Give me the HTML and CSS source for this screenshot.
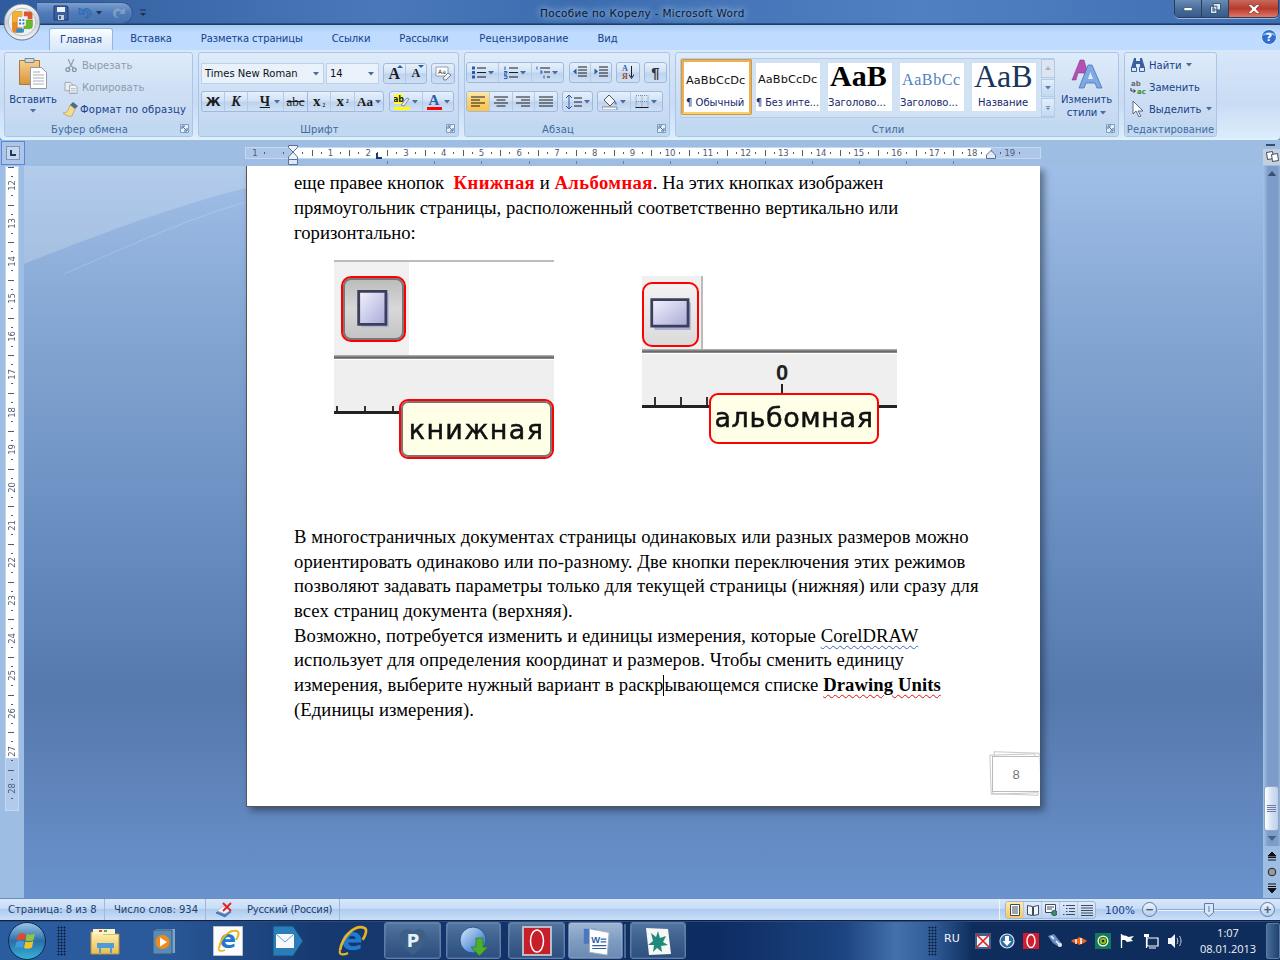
FILE: index.html
```html
<!DOCTYPE html>
<html lang="ru">
<head>
<meta charset="utf-8">
<title>Пособие по Корелу - Microsoft Word</title>
<link rel="stylesheet" href="styles.css">
</head>
<body>
<svg class="defs" aria-hidden="true">
  <defs>
    <linearGradient id="gClip" x1="0" y1="0" x2="0" y2="1"><stop offset="0" stop-color="#f6d08c"/><stop offset="1" stop-color="#d9943c"/></linearGradient>
    <linearGradient id="gOrb" x1="0" y1="0" x2="0" y2="1"><stop offset="0" stop-color="#9fc6e8"/><stop offset=".5" stop-color="#2a6ea8"/><stop offset="1" stop-color="#35b5d8"/></linearGradient>
    <linearGradient id="gSilver" x1="0" y1="0" x2="0" y2="1"><stop offset="0" stop-color="#fafbfc"/><stop offset=".5" stop-color="#c8d0d8"/><stop offset="1" stop-color="#f2f5f7"/></linearGradient>
    <linearGradient id="gFolder" x1="0" y1="0" x2="0" y2="1"><stop offset="0" stop-color="#fff2b0"/><stop offset="1" stop-color="#e6bc58"/></linearGradient>
    <linearGradient id="gGlobe" x1="0" y1="0" x2="1" y2="1"><stop offset="0" stop-color="#d8ecfb"/><stop offset="1" stop-color="#1b62c4"/></linearGradient>
    <linearGradient id="gPaper" x1="0" y1="0" x2="1" y2="1"><stop offset="0" stop-color="#f4f4fc"/><stop offset="1" stop-color="#a7a9d8"/></linearGradient>
    <symbol id="arr" viewBox="0 0 6 4"><path d="M0 0h6L3 3.500z"/></symbol>
    <symbol id="launch" viewBox="0 0 9 9"><path d="M.5.5h8v8h-8z" fill="#e6eff9" stroke="#7e9cc4"/><path d="M2 2h3M2 2v3M3 3l3.500 3.500M7 4v3H4" stroke="#4b6d9c" fill="none"/></symbol>
    <symbol id="bars" viewBox="0 0 14 12"><path d="M0 1.500h14M0 4.500h9M0 7.500h14M0 10.500h9" stroke="#1c1c1c" fill="none"/></symbol>
    <symbol id="barsC" viewBox="0 0 14 12"><path d="M0 1.500h14M2.500 4.500h9M0 7.500h14M2.500 10.500h9" stroke="#1c1c1c" fill="none"/></symbol>
    <symbol id="barsR" viewBox="0 0 14 12"><path d="M0 1.500h14M5 4.500h9M0 7.500h14M5 10.500h9" stroke="#1c1c1c" fill="none"/></symbol>
    <symbol id="barsJ" viewBox="0 0 14 12"><path d="M0 1.500h14M0 4.500h14M0 7.500h14M0 10.500h14" stroke="#1c1c1c" fill="none"/></symbol>
    <symbol id="eIcon" viewBox="0 0 24 24"><text x="12" y="19" text-anchor="middle" class="ie-e">e</text><path d="M3 19C5 8 14 0 21 2c3 1 1 6-1 9" fill="none" stroke="#e8b622" stroke-width="2"/><path d="M3 19c-1 3 2 4 6 2" fill="none" stroke="#e8b622" stroke-width="1.600"/></symbol>
  </defs>
</svg>

<div class="win">
  <header class="titlebar">
    <div class="qat">
      <svg class="ic16" viewBox="0 0 16 16"><path d="M1 1h13l1 1v13H1z" fill="#3a5f9e" stroke="#24396b"/><path d="M4 2h8v5H4z" fill="#eef2f8"/><path d="M5 10h6v5H5z" fill="#c6ccd8"/><path d="M6 11h2v3H6z" fill="#3a5f9e"/></svg>
      <svg class="ic16" viewBox="0 0 16 16"><path d="M3 3v6h6L7 7c2-2 5-1 5 2 0 2-1 3-3 4 4 0 6-2 6-5 0-4-5-6-8-3z" fill="#3f78c8" stroke="#27508c" stroke-width=".5"/></svg>
      <svg class="arr6 arr-dark" viewBox="0 0 6 4"><use href="#arr"/></svg>
      <svg class="ic16 dim" viewBox="0 0 16 16"><path d="M13 3v6H7l2-2C7 5 4 6 4 9c0 2 1 3 3 4-4 0-6-2-6-5 0-4 5-6 8-3z" fill="#8da6c6"/></svg>
    </div>
    <svg class="qat-more" viewBox="0 0 8 8"><path d="M1 1h6" stroke="#20304e"/><path d="M1 4h6L4 7z" fill="#20304e"/></svg>
    <div class="title-text">Пособие по Корелу - Microsoft Word</div>
    <div class="winbtns">
      <span class="wb wb-min"><svg viewBox="0 0 12 6" class="wbi"><path d="M.5.5h10v4H.5z" fill="#fff" stroke="#33506f"/></svg></span>
      <span class="wb wb-res"><svg viewBox="0 0 12 12" class="wbi"><path d="M3.500.5h8v7h-8zM.5 3.500h7v8h-7z" fill="#dfe8f2" stroke="#33506f"/><path d="M2.500 5.500h3v4h-3z" fill="#5d84b4"/></svg></span>
      <span class="wb wb-close"><svg viewBox="0 0 14 10" class="wbx"><path d="M1 .5h3L7 3l3-2.500h3L9 5l4 4.500h-3L7 7 4 9.500H1L5 5z" fill="#fff" stroke="#7a2a22" stroke-width=".6"/></svg></span>
    </div>
  </header>

  <svg class="officebtn" viewBox="0 0 40 40">
    <circle cx="20" cy="20" r="19" fill="url(#gSilver)" stroke="#5f7188"/>
    <circle cx="20" cy="20" r="14.500" fill="#eef1f4" stroke="#b4bcc6"/>
    <path d="M20 9h-7a3 3 0 0 0-3 3v16a3 3 0 0 0 3 3h7v-5h-5V14h5z" fill="#ea8a1c" stroke="#c0601c" stroke-width=".5"/>
    <path d="M10 20V12a3 3 0 0 1 3-3h7v5h-5v6z" fill="#f4b22c"/>
    <path d="M22 9h6a3 3 0 0 1 3 3v5h-5v-3h-4z" fill="#d65a2c"/>
    <path d="M22 18h9v6a3 3 0 0 1-3 3h-6z" fill="#6cb82c" stroke="#4c8c1c" stroke-width=".5"/>
    <path d="M16 16h8v8h-8z" fill="#f6f8fa"/>
    <path d="M17 17h2v2h-2zM20.500 17h2v2h-2zM17 20.500h2v2h-2zM20.500 20.500h2v2h-2z" fill="#2f72c8"/>
    <path d="M14 27h8v4h-8z" fill="#2f8ad0"/>
  </svg>

  <nav class="tabs">
    <span class="tab active">Главная</span>
    <span class="tab">Вставка</span>
    <span class="tab">Разметка страницы</span>
    <span class="tab">Ссылки</span>
    <span class="tab">Рассылки</span>
    <span class="tab tab-review">Рецензирование</span>
    <span class="tab">Вид</span>
    <svg class="help" viewBox="0 0 16 16"><circle cx="8" cy="8" r="7.500" fill="#2f6fd0" stroke="#dfeaf8"/><path d="M1 7c3-5 11-5 14 0-4-2-10-2-14 0z" fill="#8cb8ee"/><text x="8" y="12" text-anchor="middle" class="help-q">?</text></svg>
  </nav>

  <section class="ribbon">
    <div class="group g-clip">
      <div class="gbody row-body">
        <div class="paste">
          <svg class="paste-ic" viewBox="0 0 28 32">
            <path d="M.5 3.500h20v24H.5z" fill="url(#gClip)" stroke="#a8793a"/>
            <path d="M6 1.500h9v4H6z" fill="#cfd6de" stroke="#7f8790"/>
            <path d="M11.500 10.500h11l5 5v16h-16z" fill="#fff" stroke="#8f9aa8"/>
            <path d="M14 15h7M14 18h11M14 21h11M14 24h11M14 27h11" stroke="#a4adb8"/>
          </svg>
          <span class="paste-t">Вставить</span>
          <svg class="arr6 arr-blue" viewBox="0 0 6 4"><use href="#arr"/></svg>
        </div>
        <div class="smallcol">
          <div class="sbtn dis"><svg class="ic14" viewBox="0 0 14 14"><path d="M4 0l3 7 3-7M7 7L4 10M7 7l3 3" stroke="#9aa4b0" fill="none" stroke-width="1.400"/><circle cx="3.500" cy="11.500" r="2" fill="none" stroke="#8693a4" stroke-width="1.400"/><circle cx="10.500" cy="11.500" r="2" fill="none" stroke="#8693a4" stroke-width="1.400"/></svg>Вырезать</div>
          <div class="sbtn dis"><svg class="ic14" viewBox="0 0 14 14"><path d="M.5 1.500h6l2 2v7h-8z" fill="#e8edf3" stroke="#9aa4b0"/><path d="M5.500 4.500h6l2 2v7h-8z" fill="#f3f5f8" stroke="#9aa4b0"/><path d="M7 8h5M7 10h5M7 12h5" stroke="#b4bcc8"/></svg>Копировать</div>
          <div class="sbtn fmt"><svg class="ic16" viewBox="0 0 16 16"><path d="M10 1l5 4-3 3-5-4z" fill="#50688e"/><path d="M7 4l5 4-3 7c-3 1-7-1-9-3 3 0 5-1 7-8z" fill="#f2dc90" stroke="#ae8c3c" stroke-width=".6"/></svg>Формат по образцу</div>
        </div>
      </div>
      <div class="glabel">Буфер обмена<svg class="launch"><use href="#launch"/></svg></div>
    </div>

    <div class="group g-font">
      <div class="gbody col-body">
        <div class="trow">
          <div class="combo c-font">Times New Roman<svg class="arr6 arr-blue" viewBox="0 0 6 4"><use href="#arr"/></svg></div>
          <div class="combo c-size">14<svg class="arr6 arr-blue" viewBox="0 0 6 4"><use href="#arr"/></svg></div>
          <div class="seg w44">
            <span class="cell f1 glyph g-a1">A<i class="up"></i></span>
            <span class="cell f1 glyph g-a2">A<i class="dn"></i></span>
          </div>
          <div class="seg w24"><span class="cell f1"><svg class="ic16" viewBox="0 0 16 16"><path d="M1 1h12v9H1z" fill="#fff" stroke="#8ca0bc"/><text x="7" y="7.500" text-anchor="middle" class="tiny-a">Aa</text><path d="M8 12l5-5 3 2-5 5H9z" fill="#eef0f6" stroke="#6f7f98"/></svg></span></div>
        </div>
        <div class="trow">
          <div class="seg w183">
            <span class="cell w23 glyph serif b">Ж</span>
            <span class="cell w23 glyph serif bi">К</span>
            <span class="cell w36 glyph serif bu"><u>Ч</u><svg class="arr6 arr-blue" viewBox="0 0 6 4"><use href="#arr"/></svg></span>
            <span class="cell w24 glyph serif st">abc</span>
            <span class="cell w23 glyph serif bs">x<sub>₂</sub></span>
            <span class="cell w24 glyph serif bs">x<sup>²</sup></span>
            <span class="cell f1 glyph serif aa">Aa<svg class="arr6 arr-blue" viewBox="0 0 6 4"><use href="#arr"/></svg></span>
          </div>
          <div class="seg w65">
            <span class="cell w33"><svg class="ic16" viewBox="0 0 16 16"><path d="M0 0h9v10H0z" fill="#ffff30"/><text x="4.500" y="8" text-anchor="middle" class="tiny-ab">ab</text><path d="M7 11l6-7 2 1-5 7z" fill="#e8eef6" stroke="#7d8ca8"/><path d="M0 13h16v3H0z" fill="#ffff00"/></svg><svg class="arr6 arr-blue" viewBox="0 0 6 4"><use href="#arr"/></svg></span>
            <span class="cell f1"><span class="color-a">A</span><svg class="arr6 arr-blue" viewBox="0 0 6 4"><use href="#arr"/></svg></span>
          </div>
        </div>
      </div>
      <div class="glabel">Шрифт<svg class="launch"><use href="#launch"/></svg></div>
    </div>

    <div class="group g-para">
      <div class="gbody col-body">
        <div class="trow">
          <div class="seg w98">
            <span class="cell f1"><svg class="ic14" viewBox="0 0 14 12"><path d="M0 0h3v3H0zM0 4.500h3v3H0zM0 9h3v3H0z" fill="#2c5aa8"/><path d="M5 1.500h9M5 6h9M5 10.500h9" stroke="#1c1c1c"/></svg><svg class="arr6 arr-blue" viewBox="0 0 6 4"><use href="#arr"/></svg></span>
            <span class="cell f1"><svg class="ic14" viewBox="0 0 14 12"><path d="M1 0v3.500M0 5h3v1.500H0v2h3M0 9.500h3v2.500H0" stroke="#2c5aa8" fill="none"/><path d="M5 1.500h9M5 6h9M5 10.500h9" stroke="#1c1c1c"/></svg><svg class="arr6 arr-blue" viewBox="0 0 6 4"><use href="#arr"/></svg></span>
            <span class="cell f1"><svg class="ic14" viewBox="0 0 14 12"><path d="M1 0v3M4 4.500h2v2H4M8 9v3" stroke="#2c5aa8" fill="none"/><path d="M4 1.500h10M8 5.500h6M11 10.500h3" stroke="#1c1c1c"/></svg><svg class="arr6 arr-blue" viewBox="0 0 6 4"><use href="#arr"/></svg></span>
          </div>
          <div class="seg w43">
            <span class="cell f1"><svg class="ic14" viewBox="0 0 14 12"><path d="M5 .5h9M5 3.500h9M5 6.500h9M5 9.500h9" stroke="#1c1c1c"/><path d="M0 5l3.500-3v6z" fill="#2c5aa8"/></svg></span>
            <span class="cell f1"><svg class="ic14" viewBox="0 0 14 12"><path d="M5 .5h9M5 3.500h9M5 6.500h9M5 9.500h9" stroke="#1c1c1c"/><path d="M4 5L.5 2v6z" fill="#2c5aa8"/></svg></span>
          </div>
          <div class="seg w24"><span class="cell f1 sortcell"><span class="sort-t"><b class="s-a">A</b><b class="s-r">Я</b></span><svg class="ic-arrow" viewBox="0 0 5 13"><path d="M2.500 0v11M0 8.500l2.500 4 2.500-4" stroke="#1c1c1c" fill="none"/></svg></span></div>
          <div class="seg w23"><span class="cell f1 pilcrow">¶</span></div>
        </div>
        <div class="trow">
          <div class="seg w92">
            <span class="cell f1 on"><svg class="ic14"><use href="#bars"/></svg></span>
            <span class="cell f1"><svg class="ic14"><use href="#barsC"/></svg></span>
            <span class="cell f1"><svg class="ic14"><use href="#barsR"/></svg></span>
            <span class="cell f1"><svg class="ic14"><use href="#barsJ"/></svg></span>
          </div>
          <div class="seg w31"><span class="cell f1"><svg class="ic16" viewBox="0 0 16 14"><path d="M3 0v14M0 3l3-3 3 3M0 11l3 3 3-3" stroke="#2c5aa8" fill="none"/><path d="M8 3h8M8 7h8M8 11h8" stroke="#1c1c1c"/></svg><svg class="arr6 arr-blue" viewBox="0 0 6 4"><use href="#arr"/></svg></span></div>
          <div class="seg w66">
            <span class="cell f1"><svg class="ic16" viewBox="0 0 16 16"><path d="M7 1l6 6-5 5-6-6z" fill="#f4f6fa" stroke="#505868"/><path d="M13 7c2 2 2 3 1 4-1-1-2-2-1-4z" fill="#4f7fc0"/><path d="M0 13h15v3H0z" fill="#fff" stroke="#7f8896"/></svg><svg class="arr6 arr-blue" viewBox="0 0 6 4"><use href="#arr"/></svg></span>
            <span class="cell f1"><svg class="ic14" viewBox="0 0 13 13"><path d="M.5.500h12v12H.5zM6.500.500v12M.5 6.500h12" stroke="#7a8aa2" stroke-dasharray="1 1" fill="none"/><path d="M0 12.500h13" stroke="#1c1c1c"/></svg><svg class="arr6 arr-blue" viewBox="0 0 6 4"><use href="#arr"/></svg></span>
          </div>
        </div>
      </div>
      <div class="glabel">Абзац<svg class="launch"><use href="#launch"/></svg></div>
    </div>

    <div class="group g-styles">
      <div class="gbody row-body styles-body">
        <div class="gallery">
          <div class="tile current"><span class="tt t-norm">AaBbCcDc</span><span class="tl">¶ Обычный</span></div>
          <div class="tile"><span class="tt t-norm">AaBbCcDc</span><span class="tl">¶ Без инте...</span></div>
          <div class="tile"><span class="tt t-h1">AaB</span><span class="tl">Заголово...</span></div>
          <div class="tile"><span class="tt t-h2">AaBbCc</span><span class="tl">Заголово...</span></div>
          <div class="tile"><span class="tt t-title">AaB</span><span class="tl">Название</span></div>
          <div class="gscroll">
            <span class="gs gs-dis"><svg class="arr6" viewBox="0 0 6 4"><path d="M0 4h6L3 0z"/></svg></span>
            <span class="gs"><svg class="arr6" viewBox="0 0 6 4"><use href="#arr"/></svg></span>
            <span class="gs gs-more"><svg class="arr6" viewBox="0 0 6 6"><path d="M0 .5h6v1H0zM0 2.500h6L3 6z"/></svg></span>
          </div>
        </div>
        <div class="change">
          <svg class="change-ic" viewBox="0 0 32 30">
            <path d="M1 21L9 1h4l4 14-2 3-2-4H7l-2 7z" fill="#b44fb4" stroke="#7c2f80" stroke-width=".5"/>
            <path d="M8 29L17 6h4l10 23h-5l-2-5h-9l-2 5z" fill="#7fa9e2" stroke="#3c6cb0" stroke-width=".7"/>
            <path d="M17 20h5l-2.500-7z" fill="#dfeaf8"/>
          </svg>
          <span>Изменить</span>
          <span>стили<svg class="arr6 arr-blue" viewBox="0 0 6 4"><use href="#arr"/></svg></span>
        </div>
      </div>
      <div class="glabel">Стили<svg class="launch"><use href="#launch"/></svg></div>
    </div>

    <div class="group g-edit">
      <div class="gbody smallcol edit-col">
        <div class="sbtn"><svg class="ic16" viewBox="0 0 16 14"><path d="M4 0h2v3h4V0h2l3 10H10V6H6v4H1z" fill="#3a5f9e"/><path d="M1.500 9.500h5v4h-5zM9.500 9.500h5v4h-5z" fill="#dde6f4" stroke="#3a5f9e"/></svg>Найти<svg class="arr6 arr-blue" viewBox="0 0 6 4"><use href="#arr"/></svg></div>
        <div class="sbtn"><svg class="ic16 icbox" viewBox="0 0 16 16"><text x="1" y="7" class="ab-g">ab</text><text x="7" y="15" class="ac-g">ac</text><path d="M1 9v3h4M3.500 10.500L5.500 12 3.500 13.500" stroke="#334" fill="none"/></svg>Заменить</div>
        <div class="sbtn"><svg class="ic16" viewBox="0 0 12 16"><path d="M1 0v13l3-3 3 6 2-1-3-5h5z" fill="#fff" stroke="#57678a"/></svg>Выделить<svg class="arr6 arr-blue" viewBox="0 0 6 4"><use href="#arr"/></svg></div>
      </div>
      <div class="glabel edit-label">Редактирование</div>
    </div>
  </section>

  <div class="rulerrow">
    <div class="tabsel"><span class="tabsel-in"><i class="ell"></i></span></div>
    <div class="hruler">
      <span class="rc first">1</span><span class="rc rc-blank"></span><span class="rc">1</span><span class="rc">2</span><span class="rc">3</span><span class="rc">4</span><span class="rc">5</span><span class="rc">6</span><span class="rc">7</span><span class="rc">8</span><span class="rc">9</span><span class="rc">10</span><span class="rc">11</span><span class="rc">12</span><span class="rc">13</span><span class="rc">14</span><span class="rc">15</span><span class="rc">16</span><span class="rc">17</span><span class="rc">18</span><span class="rc">19</span>
    </div>
    <svg class="hg" viewBox="0 0 10 20"><path d="M.5.500h9v2L5 7 9.500 12v2.500h-9V12L5 7 .5 2.500z" fill="#eef3fa" stroke="#5a7094"/><path d="M.5 14.500h9v5h-9z" fill="#dfe8f4" stroke="#5a7094"/></svg>
    <svg class="hg-right" viewBox="0 0 10 9"><path d="M.5 8.500V5L5 .5 9.500 5v3.500z" fill="#e4ecf6" stroke="#5a7094"/></svg>
    <i class="tabstop"></i>
    <i class="rticks"></i>
    <i class="rsplit"></i>
    <svg class="viewruler" viewBox="0 0 17 16"><path d="M0 0h17v16H0z" fill="#c6d0dc"/><path d="M3.500 3.500l6-1 1 7-6 1z" fill="#fff" stroke="#3e4e66"/><path d="M8.500 5.500l6-1 1 7-6 1z" fill="#fff" stroke="#3e4e66"/></svg>
  </div>

  <main class="work">
    <svg class="swoosh" viewBox="0 0 222 110" aria-hidden="true"><path d="M0 0h222v22C150 40 70 70 0 98z" fill="#fff" fill-opacity=".2"/><path d="M40 108C100 82 165 52 222 36" fill="none" stroke="#fff" stroke-opacity=".18"/></svg>
    <aside class="vbar">
      <div class="vruler">
        <span class="vc"><b>12</b></span><span class="vc"><b>13</b></span><span class="vc"><b>14</b></span><span class="vc"><b>15</b></span><span class="vc"><b>16</b></span><span class="vc"><b>17</b></span><span class="vc"><b>18</b></span><span class="vc"><b>19</b></span><span class="vc"><b>20</b></span><span class="vc"><b>21</b></span><span class="vc"><b>22</b></span><span class="vc"><b>23</b></span><span class="vc"><b>24</b></span><span class="vc"><b>25</b></span><span class="vc"><b>26</b></span><span class="vc"><b>27</b></span><span class="vc"><b>28</b></span>
      </div>
    </aside>
    <div class="docarea">
      <article class="page">
        <p class="para para-first">еще правее кнопок&nbsp; <b class="red">Книжная</b> и <b class="red">Альбомная</b>. На этих кнопках изображен<br>прямоугольник страницы, расположенный соответственно вертикально или<br>горизонтально:</p>
        <div class="figs">
          <figure class="fig fig-l">
            <i class="l-top"></i>
            <i class="l-panel"></i>
            <i class="l-line"></i>
            <i class="l-strip"></i>
            <i class="l-axis"></i>
            <i class="l-dots"></i>
            <span class="l-btn"><svg class="pg pg-p" viewBox="0 0 30 34"><path d="M4 3h24v30H4z" fill="#aeb0da"/><path d="M1.500 1.500h24v29h-24z" fill="url(#gPaper)" stroke="#3b3f5c" stroke-width="2.500"/></svg></span>
            <span class="tip tip-l">книжная</span>
          </figure>
          <figure class="fig fig-r">
            <i class="r-panel"></i>
            <i class="r-line"></i>
            <i class="r-strip"></i>
            <i class="r-axis"></i>
            <i class="r-dots"></i>
            <b class="r-zero">0</b>
            <i class="r-tick"></i>
            <span class="r-btn"><svg class="pg pg-l" viewBox="0 0 38 30"><path d="M4 4h33v25H4z" fill="#aeb0da"/><path d="M1.500 1.500h33v24h-33z" fill="url(#gPaper)" stroke="#3b3f5c" stroke-width="2.500"/></svg></span>
            <span class="tip tip-r">альбомная</span>
          </figure>
        </div>
        <p class="para">В многостраничных документах страницы одинаковых или разных размеров можно<br>ориентировать одинаково или по-разному. Две кнопки переключения этих режимов<br>позволяют задавать параметры только для текущей страницы (нижняя) или сразу для<br>всех страниц документа (верхняя).<br>Возможно, потребуется изменить и единицы измерения, которые <span class="sq-blue">CorelDRAW</span><br>использует для определения координат и размеров. Чтобы сменить единицу<br>измерения, выберите нужный вариант в раскр<span class="caret"></span>ывающемся списке <b class="sq-red">Drawing Units</b><br>(Единицы измерения).</p>
        <div class="pagenum"><i class="pn-back1"></i><i class="pn-back2"></i><span class="pn-front">8</span></div>
      </article>
    </div>
    <aside class="vscroll">
      <svg class="sb-arr sb-up" viewBox="0 0 12 7"><path d="M0 7h12L6 0z"/></svg>
      <span class="sb-track"><span class="sb-thumb"><i class="grip"></i></span></span>
      <svg class="sb-arr sb-down" viewBox="0 0 12 7"><path d="M0 0h12L6 7z"/></svg>
      <span class="sb-browse">
        <svg class="br" viewBox="0 0 10 10"><path d="M5 0l4 4H1zM1 5.500h8M1 8h8" stroke="#111" fill="#111"/></svg>
        <svg class="br" viewBox="0 0 10 10"><circle cx="5" cy="5" r="3.800" fill="#9a9a9a" stroke="#222"/></svg>
        <svg class="br" viewBox="0 0 10 10"><path d="M1 1h8M1 3.500h8M5 10L1 5.500h8z" stroke="#111" fill="#111"/></svg>
      </span>
    </aside>
  </main>

  <footer class="status">
    <span class="st st1">Страница: 8 из 8</span>
    <span class="st st2">Число слов: 934</span>
    <span class="st st3"><svg class="ic18" viewBox="0 0 18 16"><path d="M1 11l6-5 9 4-6 5z" fill="#4b7ec4" stroke="#24467c" stroke-width=".5"/><path d="M2 9l6-5 8 4-6 4z" fill="#eef2f8" stroke="#8a98ae" stroke-width=".5"/><path d="M8 1l8 8M16 1l-8 8" stroke="#e02020" stroke-width="1.800"/></svg><span class="st-lang">Русский (Россия)</span></span>
    <span class="st-fill"></span>
    <div class="viewctl">
      <span class="vb on"><svg class="ic12" viewBox="0 0 12 12"><path d="M1.500.500h9v11h-9z" fill="#fff" stroke="#3e4a5e"/><path d="M3 3h6M3 5h6M3 7h6M3 9h6" stroke="#3e4a5e"/></svg></span>
      <span class="vb"><svg class="ic12" viewBox="0 0 12 12"><path d="M.5 1.500l5 1v9l-5-1zM11.500 1.500l-5 1v9l5-1z" fill="#f4f6fa" stroke="#3e4a5e"/></svg></span>
      <span class="vb"><svg class="ic12" viewBox="0 0 12 12"><path d="M.5.500h10v8H.5z" fill="#fff" stroke="#3e4a5e"/><path d="M2 3h7M2 5h5" stroke="#3e4a5e"/><circle cx="9.300" cy="9" r="2.700" fill="#3f8c5c" stroke="#2a5c8c"/></svg></span>
      <span class="vb"><svg class="ic12" viewBox="0 0 12 12"><path d="M0 1.500h1.500M3 1.500h9M3 4.500h1.500M6 4.500h6M3 7.500h1.500M6 7.500h6M0 10.500h1.500M3 10.500h9" stroke="#3e4a5e"/></svg></span>
      <span class="vb"><svg class="ic12" viewBox="0 0 12 12"><path d="M0 1.500h12M0 4h12M0 6.500h12M0 9h12M0 11.500h12" stroke="#3e4a5e"/></svg></span>
    </div>
    <span class="zoomval">100%</span>
    <span class="zbtn">−</span>
    <span class="zslider"><svg class="zthumb" viewBox="0 0 10 14"><path d="M.5.500h9v9L5 13.500.5 9.500z" fill="#dbe7f6" stroke="#5b7ca8"/><path d="M5 3v6" stroke="#5b7ca8"/></svg></span>
    <span class="zbtn">+</span>
  </footer>
</div>

<div class="taskbar">
  <svg class="orb" viewBox="0 0 38 38">
    <circle cx="19" cy="19" r="18.500" fill="url(#gOrb)" stroke="#0c2d52"/>
    <path d="M10 13c3-2 5-2 8-1l-1.500 6.500c-3-1-5-1-8 .5z" fill="#e0492c"/>
    <path d="M19 12c3 1 5 1 8-.5L25.500 18c-3 1.500-5 1.500-8 .5z" fill="#8cc63e"/>
    <path d="M8.300 20c3-1.500 5-1.500 8-.5L15 26c-3-1-5-1-8 .5z" fill="#3e9cdc"/>
    <path d="M17.300 19.500c3 1 5 1 8-.5L24 25.500c-3 1.500-5 1.500-8 .5z" fill="#f5c22c"/>
  </svg>
  <i class="tgrip"></i>
  <span class="pin p-folder"><svg class="ti" viewBox="0 0 32 30"><path d="M2 6h10l2 2h16v20H2z" fill="url(#gFolder)" stroke="#b8913e"/><path d="M4 3h22v5H4z" fill="#fbf3cc"/><path d="M10 4h3v2h-3z" fill="#d94a3c"/><path d="M15 4h3v2h-3z" fill="#5aa85a"/><path d="M8 17h17v5H8z" fill="#4d9cd8"/><path d="M10 22h2v5h-2zM21 22h2v5h-2z" fill="#4d9cd8"/></svg></span>
  <span class="pin p-media"><svg class="ti" viewBox="0 0 24 28"><path d="M4 2h19v24H4z" fill="#7fa4c4"/><path d="M1 3h19v24H1z" fill="#5c8cb4" stroke="#34597e"/><circle cx="10.500" cy="15" r="7" fill="#f08a1c"/><path d="M8 10.500l7 4.500-7 4.500z" fill="#fff"/></svg></span>
  <span class="pin p-ie"><svg class="ti" viewBox="0 0 30 30"><path d="M.5.500h29v29H.5z" fill="#fcfcfc" stroke="#b6c2d0"/><use href="#eIcon" x="3" y="3" width="24" height="24"/></svg></span>
  <span class="pin p-mail"><svg class="ti" viewBox="0 0 32 32"><path d="M1 1h20l10 15-10 15H1z" fill="#2b7db8" stroke="#174d80"/><path d="M4 9h18v14H4z" fill="#f6f8fc"/><path d="M4 9l9 8 9-8" fill="none" stroke="#6a9cc8"/></svg></span>
  <span class="pin p-ie2"><svg class="ti" viewBox="0 0 24 24"><use href="#eIcon"/></svg></span>
  <span class="tbtn b-p"><svg class="ti" viewBox="0 0 30 30"><path d="M15 29C6 22 1 16 2 9c1-6 9-8 13-3 4-5 12-3 13 3 1 7-4 13-13 20z" fill="#3c6088"/><text x="15" y="21" text-anchor="middle" class="p-let">P</text></svg></span>
  <span class="tbtn b-globe"><svg class="ti" viewBox="0 0 30 30"><circle cx="14" cy="14" r="13" fill="url(#gGlobe)" stroke="#20589c"/><path d="M17 12h7v9h5l-8.500 9L12 21h5z" fill="#4db02c" stroke="#2a7016" stroke-width=".6"/></svg></span>
  <span class="tbtn b-opera"><svg class="ti" viewBox="0 0 30 30"><path d="M1 1h28v28H1z" fill="#c81e2c" stroke="#b8bcc4" stroke-width="2"/><ellipse cx="15" cy="15" rx="6.500" ry="11" fill="none" stroke="#fff" stroke-width="1.500"/></svg></span>
  <span class="tbtn b-word active"><svg class="ti" viewBox="0 0 32 32"><path d="M3 3h13v16H3z" fill="#4a78c0"/><path d="M9 3l21 4-2 24-19-3z" fill="#fff" stroke="#9eb0c8"/><path d="M21 14h6M21 17h6M12 21h15M12 24h15" stroke="#2e5ea8" stroke-width="1.300"/><text x="11" y="18" class="w-let">W</text></svg></span>
  <i class="tb-sep"></i>
  <span class="tbtn b-plant"><svg class="ti" viewBox="0 0 30 30"><path d="M3 2l22 1 3 25-22 1z" fill="#f6f8f6"/><path d="M8 7l5 4 2-6 2 7 6-2-3 6 5 3-7 1 1 6-5-4-4 4 1-7-6 0 5-4z" fill="#1e8a7c"/></svg></span>
  <span class="tfill"></span>
  <i class="tgrip"></i>
  <span class="lang">RU</span>
  <div class="tray">
    <svg class="ic16b" viewBox="0 0 16 16"><path d="M0 0h16v16H0z" fill="#3c6488"/><path d="M2 3h12v11H2z" fill="#eef2f6"/><path d="M1 1l14 14M15 1L1 15" stroke="#e01c1c" stroke-width="1.500"/></svg>
    <svg class="ic16b" viewBox="0 0 16 16"><circle cx="8" cy="8" r="7" fill="#2a6ea8" stroke="#dfe6ee" stroke-width="1.200"/><path d="M6 3h4v5h2.500L8 13 3.500 8H6z" fill="#fff"/></svg>
    <svg class="ic16b" viewBox="0 0 16 16"><path d="M0 0h16v16H0z" fill="#d01c2c"/><ellipse cx="8" cy="8" rx="4" ry="6.500" fill="none" stroke="#fff" stroke-width="1.400"/></svg>
    <svg class="ic16b" viewBox="0 0 16 16"><path d="M1 3l6-2 4 5 4 5-3 3-6-4z" fill="#6a8cc4"/><path d="M4 3l3 3M9 8l3 3" stroke="#f0f4fa" stroke-width="1.500"/><circle cx="13" cy="12" r="2" fill="#e4e8ee"/></svg>
    <svg class="ic16b" viewBox="0 0 16 16"><path d="M0 8l3-2 2 1 3-3 5 2 3 2-3 2-5 2-3-3-2 1z" fill="#f0641c"/><path d="M5 6v5M10 5v6" stroke="#fff" stroke-width="1.500"/></svg>
    <svg class="ic16b" viewBox="0 0 16 16"><path d="M0 0h16v16H0z" fill="#0f7a5c"/><circle cx="8" cy="8" r="5.500" fill="#fff"/><circle cx="8" cy="8" r="3.800" fill="#8cc21c" stroke="#2a5c1c"/><circle cx="8" cy="8" r="1.200" fill="#14301c"/></svg>
    <svg class="ic16b" viewBox="0 0 16 16"><path d="M2.500 1v14" stroke="#fff" stroke-width="1.300"/><path d="M3 2l5 1 1 1 6-1-3 3 2 2-6 1-2-2-3 0z" fill="#fff"/></svg>
    <svg class="ic16b" viewBox="0 0 16 16"><path d="M4 5h11v8H4zM6 15h7" fill="#12305c" stroke="#fff" stroke-width="1.200"/><path d="M1 1h5v3H1z" fill="#fff"/><path d="M3.500 4v11" stroke="#fff" stroke-width="1.200"/></svg>
    <svg class="ic16b" viewBox="0 0 16 16"><path d="M1 5h3l4-4v14l-4-4H1z" fill="#f2f4f8"/><path d="M10 5c1 2 1 4 0 6M12.500 3c2 3 2 7 0 10" fill="none" stroke="#c4cede"/></svg>
  </div>
  <div class="clock"><span>1:07</span><span>08.01.2013</span></div>
  <span class="showdesk"></span>
</div>
</body>
</html>
```

FILE: styles.css
```css
* { box-sizing: border-box; }
html, body { margin: 0; padding: 0; }
body {
  width: 1280px; height: 960px; overflow: hidden;
  display: flex; flex-direction: column;
  font-family: "DejaVu Sans", sans-serif; font-size: 10px;
  color: #15428b; background: #6a92cc;
}
i, b.r-zero { display: block; }
svg { display: block; flex: none; }
.defs { position: absolute; width: 0; height: 0; }
.win { flex: 1; display: flex; flex-direction: column; position: relative; min-height: 0; }

/* title bar */
.titlebar {
  height: 25px; flex: none; position: relative; display: flex; align-items: flex-start;
  padding-left: 37px;
  background: linear-gradient(90deg, #2f5c9e 0%, #4a78b8 30%, #3c6cb0 45%, #5180c2 72%, #3e6eb2 100%);
  border-bottom: 1px solid #1f3d66;
  box-shadow: inset 0 -1px 0 #2a4f82;
}
.officebtn { position: absolute; left: 3px; top: 3px; width: 38px; height: 38px; z-index: 3; }
.qat {
  margin-top: 2px; width: 96px; height: 22px; display: flex; align-items: center; gap: 7px;
  padding-left: 16px;
  border: 1px solid #3a5680; border-left: 0; border-radius: 0 12px 12px 0;
  background: linear-gradient(#7aa0d2, #4f7bb8 50%, #4472b0);
}
.qat-more { width: 8px; height: 8px; margin: 9px 0 0 6px; }
.ic16 { width: 16px; height: 16px; }
.ic14 { width: 14px; height: 13px; }
.ic12 { width: 12px; height: 12px; }
.ic18 { width: 18px; height: 16px; }
.dim { opacity: .75; margin-left: 3px; }
.arr6 { width: 6px; height: 4px; }
.arr-dark { fill: #1f3458; margin-left: -3px; }
.arr-blue { fill: #4a6c9c; }
.title-text {
  position: absolute; left: 540px; top: 7px; font-size: 10.5px; letter-spacing: .29px;
  color: #0e1a2c; white-space: nowrap;
  text-shadow: 0 0 6px #a8c8ee, 0 0 10px #a8c8ee;
}
.winbtns {
  margin-left: auto; margin-right: 1px; width: 105px; height: 18px; display: flex;
  border: 1px solid #2a3e58; border-top: 0; border-radius: 0 0 5px 5px; overflow: hidden;
  box-shadow: 0 1px 0 #9ab8dc;
}
.wb { display: flex; align-items: center; justify-content: center; border-right: 1px solid #2a3e58; }
.wb-min, .wb-res { width: 27px; background: linear-gradient(#6a8cb4, #4a6e9c 50%, #36598a); }
.wb-close { flex: 1; border-right: 0; background: linear-gradient(#c86a5c, #b83a2c 50%, #e07868); }
.wbi { width: 11px; height: 11px; }
.wb-min .wbi { height: 5px; margin-top: 2px; }
.wbx { width: 14px; height: 10px; }

/* tabs */
.tabs {
  height: 25px; flex: none; display: flex; align-items: flex-end; gap: 6px;
  padding-left: 49px; background: linear-gradient(#a8cbf2, #bfdbff 30%, #bfdbff);
  position: relative;
}
.tab { height: 22px; padding: 0 11.5px; line-height: 22px; color: #15428b; white-space: nowrap; letter-spacing: -.12px; }
.tab.active {
  color: #15428b; border: 1px solid #8fb5e2; border-bottom: 0; border-radius: 3px 3px 0 0;
  background: linear-gradient(#fff, #eaf3fd 40%, #d9e8f9); line-height: 21px; padding: 0 10px; letter-spacing: -.2px;
}
.tab-review { margin-left: 2px; letter-spacing: .15px; }
.help { width: 16px; height: 16px; position: absolute; right: 3px; top: 4px; }
.help-q { font: bold 11px "DejaVu Sans", sans-serif; fill: #fff; }

/* ribbon */
.ribbon {
  height: 90px; flex: none; display: flex; gap: 5px; padding: 2px 3px 3px 4px;
  background: linear-gradient(#d8e7f9, #c9dcf4 60%, #dcecfb);
  border-bottom: 2px solid #dff2fc;
  border-radius: 0 0 4px 4px;
}
.group {
  display: flex; flex-direction: column; position: relative; height: 85px;
  border: 1px solid #a9c6e8; border-radius: 3px; overflow: hidden;
  background: linear-gradient(#deebf9, #cfe0f5 45%, #c2d6f0);
}
.g-clip { width: 189px; }
.g-font { width: 261px; }
.g-para { width: 206px; }
.g-styles { width: 444px; }
.g-edit { width: 93px; }
.gbody { flex: 1; min-height: 0; }
.row-body { display: flex; }
.col-body { display: flex; flex-direction: column; gap: 7px; padding: 10px 0 0 2px; }
.g-para .col-body { padding: 9px 0 0 1px; gap: 8px; }
.glabel {
  height: 15px; flex: none; text-align: center; line-height: 17px; color: #44699e; letter-spacing: .1px;
  background: #c1d8f1; position: relative; white-space: nowrap; padding-right: 18px;
}
.edit-label { letter-spacing: 0; padding-right: 0; }
.launch { width: 9px; height: 9px; position: absolute; right: 3px; top: 3px; }

.paste { width: 50px; display: flex; flex-direction: column; align-items: center; padding-top: 4px; flex: none; margin-left: 3px; }
.paste-ic { width: 28px; height: 32px; }
.paste-t { margin-top: 4px; line-height: 14px; white-space: nowrap; letter-spacing: -.1px; }
.paste .arr6 { margin-top: 2px; }
.smallcol { display: flex; flex-direction: column; }
.sbtn { height: 22px; display: flex; align-items: center; gap: 4px; white-space: nowrap; }
.g-clip .smallcol { margin-left: 3px; padding-top: 1px; }
.g-clip .sbtn { padding-left: 1px; }
.g-clip .sbtn:nth-child(-n+2) { padding-left: 3px; gap: 4px; }
.g-clip .sbtn.fmt { gap: 1px; letter-spacing: .22px; padding-left: 2px; }
.dis { color: #8d9bad; }
.edit-col { padding: 1px 0 0 5px; }
.edit-col .sbtn { gap: 3px; }
.edit-col .sbtn .arr6 { margin-left: 2px; }

.trow { display: flex; height: 21px; gap: 4px; }
.combo {
  height: 21px; display: flex; align-items: center; justify-content: space-between; padding: 0 4px 0 3px;
  color: #111; background: #e9f1fb; border: 1px solid #bdd2ea; white-space: nowrap;
}
.c-font { width: 123px; margin-right: -2px; }
.c-size { width: 53px; }
.seg {
  height: 21px; display: flex; border: 1px solid #9fbadc; border-radius: 3px; overflow: hidden;
  background: linear-gradient(#e6f0fb, #d2e2f6 45%, #bed3ee 55%, #cfe0f5);
}
.w24 { width: 24px; } .w23 { width: 23px; } .w33 { width: 33px; flex: none; } .w36 { width: 36px; flex: none; }
.w44 { width: 44px; } .w43 { width: 43px; } .w65 { width: 65px; margin-left: 1px; } .w66 { width: 66px; }
.w92 { width: 92px; } .w98 { width: 98px; margin-right: 1px; } .w31 { width: 31px; } .w183 { width: 183px; }
.seg .cell.w23 { width: 23px; flex: none; } .seg .cell.w24 { width: 24px; flex: none; }
.cell {
  display: flex; align-items: center; justify-content: center; gap: 2px; min-width: 0;
  border-right: 1px solid #b4cbe6; color: #111; position: relative; white-space: nowrap;
}
.cell:last-child { border-right: 0; }
.f1 { flex: 1; }
.on { background: linear-gradient(#fde9a8, #fbd06c 50%, #fcc24c); }
.serif { font-family: "Liberation Serif", serif; }
.glyph { font-weight: bold; color: #1c1c1c; }
.b { font-family: "DejaVu Sans", sans-serif; font-size: 12px; }
.bi { font-style: italic; font-size: 14px; }
.bu { font-size: 14px; gap: 4px; justify-content: flex-end; padding-right: 3px; }
.serif.st { text-decoration: line-through; font-size: 13px; font-weight: normal; }
.bs { font-size: 15px; }
.bs sub, .bs sup { font-size: 9px; line-height: 0; }
.aa { font-size: 13px; }
.g-a1 { font-family: "Liberation Serif", serif; font-size: 16px; }
.g-a2 { font-family: "Liberation Serif", serif; font-size: 12px; }
.up, .dn { width: 0; height: 0; border: 3px solid transparent; position: absolute; right: 2px; top: 1px; }
.up { border-top: 0; border-bottom: 3px solid #2c5aa8; }
.dn { border-bottom: 0; border-top: 3px solid #2c5aa8; }
.tiny-a { font: 6px "DejaVu Sans", sans-serif; fill: #222; }
.tiny-ab { font: bold 8px "DejaVu Sans", sans-serif; fill: #222; }
.color-a { font: bold 15px/15px "Liberation Serif", serif; color: #2c5aa8; border-bottom: 3px solid #f00; width: 15px; text-align: center; height: 17px; }
.sortcell { gap: 1px; }
.sort-t { display: flex; flex-direction: column; font: bold 8px/8px "Liberation Serif", serif; }
.s-a { color: #2c5aa8; }
.s-r { color: #a84a2c; }
.ic-arrow { width: 5px; height: 13px; }
.pilcrow { font: bold 15px "Liberation Sans", sans-serif; color: #333; }

/* styles gallery */
.styles-body { padding: 5px 0 0 4px; }
.gallery {
  width: 375px; height: 60px; flex: none; display: flex; gap: 8px; align-items: flex-start; padding-left: 0;
  border: 1px solid #b2cbe8; border-radius: 2px; background: #d2e2f5; position: relative;
}
.tile {
  width: 64px; height: 48px; margin-top: 4px; flex: none; background: #fff; display: flex; flex-direction: column;
  align-items: flex-start; color: #15286b;
}
.tile.current {
  width: 71px; height: 56px; margin: 0 -4px 0 0; padding: 3px 2px;
  border: 3px solid #f0b050; border-radius: 2px;
  outline: 1px solid #c99a52; outline-offset: -1px;
  background: #fff;
  border-bottom-color: #fbd060;
}
.tt { height: 33px; flex: none; display: flex; align-items: center; white-space: nowrap; width: 100%; color: #111; padding-left: 2px; }
.current .tt { height: 31px; padding-left: 0; }
.t-norm { font-size: 11.3px; letter-spacing: .1px; overflow: hidden; }
.t-h1 { font: bold 30px/24px "Liberation Serif", serif; color: #000; padding-bottom: 8px; }
.t-h2 { font: 16px/20px "Liberation Serif", serif; color: #4f81bd; letter-spacing: .6px; }
.t-title { font: 32px/24px "Liberation Serif", serif; color: #17365d; padding-bottom: 8px; }
.tl { font-size: 10px; line-height: 14px; white-space: nowrap; }
.tile:nth-child(2) .tl { font-size: 9.600px; }
.tile:nth-child(5) .tl { padding-left: 6px; }
.gscroll { margin-left: -3px; width: 14px; flex: none; display: flex; flex-direction: column; align-self: stretch; gap: 1px; }
.gs {
  flex: 1; display: flex; align-items: center; justify-content: center; fill: #5a7aa8;
  background: linear-gradient(#e2eefb, #c4d8f1); border: 1px solid #b2cbe8;
}
.gs-dis { background: #dde5ee; fill: #a8b4c4; }
.change { flex: 1; display: flex; flex-direction: column; align-items: center; line-height: 13px; padding-top: 1px; }
.change span { display: flex; align-items: center; gap: 3px; white-space: nowrap; }
.change-ic { width: 32px; height: 30px; margin-bottom: 4px; }

/* rulers */
.rulerrow {
  height: 26px; flex: none; position: relative; display: flex;
  background: #9ebde3;
}
.tabsel {
  width: 24px; height: 24px; margin: 1px 0 0 1px; flex: none; border: 1px solid #5a86d8;
  background: #adc5e8; display: flex; align-items: center; justify-content: center;
}
.tabsel-in { width: 14px; height: 14px; background: #c8d6e8; border: 1px solid #7898c4; display: flex; align-items: center; justify-content: center; }
.ell { width: 6px; height: 6px; border-left: 2px solid #1f3a6a; border-bottom: 2px solid #1f3a6a; }
.hruler {
  width: 796px; height: 12px; margin: 7px 0 0 220px; display: flex; overflow: hidden; flex: none;
  background: linear-gradient(90deg, #adc6ea 48px, #fff 48px, #fff 746px, #adc6ea 746px);
  outline: 1px solid #c6d8f0; outline-offset: -1px;
}
.rc {
  flex: 0 0 37.75px; height: 12px; text-align: center; font-size: 8.5px; line-height: 12px; color: #4e5c74;
  background:
    linear-gradient(#4e5c74, #4e5c74) 9px 5px / 1px 2px no-repeat,
    linear-gradient(#4e5c74, #4e5c74) 28px 5px / 1px 2px no-repeat,
    linear-gradient(#4e5c74, #4e5c74) 0 3px / 1px 6px no-repeat;
}
.rc.first { margin-left: -9px; }
.rc-blank { background:
    linear-gradient(#4e5c74, #4e5c74) 9px 5px / 1px 2px no-repeat,
    linear-gradient(#4e5c74, #4e5c74) 28px 5px / 1px 2px no-repeat; }
.hg { position: absolute; left: 288px; top: 5px; width: 10px; height: 20px; }
.hg-right { position: absolute; left: 986px; top: 10px; width: 10px; height: 9px; }
.tabstop { position: absolute; left: 376px; top: 13px; width: 6px; height: 6px; border-left: 2px solid #1f3a6a; border-bottom: 2px solid #1f3a6a; }
.rticks {
  position: absolute; left: 387px; top: 21px; width: 568px; height: 3px;
  background: repeating-linear-gradient(90deg, #6a7f9e 0 1px, transparent 1px 47.2px);
}
.rsplit { position: absolute; left: 1266px; top: 4px; width: 9px; height: 2px; background: #3c4c6c; }
.viewruler { position: absolute; left: 1263px; top: 9px; width: 17px; height: 16px; }

.work {
  flex: 1; min-height: 0; display: flex; position: relative;
  background: linear-gradient(#a0bfe8 0, #84a6d2 22%, #6389bd 55%, #5579ac 72%, #6a92cc 100%);
  overflow: hidden;
}
.swoosh { position: absolute; left: 24px; top: 0; width: 222px; height: 110px; }
.vbar { width: 24px; flex: none; background: #9ebde3; position: relative; }
.vruler {
  width: 14px; margin: 0 0 0 5px; height: 645px; display: flex; flex-direction: column; padding-top: 1px;
  background: linear-gradient(#fff 592px, #b2cbec 592px);
  outline: 1px solid #c6d8f0; outline-offset: -1px; overflow: hidden;
}
.vc {
  flex: 0 0 37.7px; display: flex; align-items: center; justify-content: center;
  background:
    linear-gradient(#4e5c74, #4e5c74) 6px 9px / 2px 1px no-repeat,
    linear-gradient(#4e5c74, #4e5c74) 6px 28px / 2px 1px no-repeat,
    linear-gradient(#4e5c74, #4e5c74) 3px 0 / 6px 1px no-repeat;
}
.vc b { font-weight: normal; font-size: 8.5px; color: #4e5c74; writing-mode: vertical-rl; transform: rotate(180deg); line-height: 10px; }
.docarea { flex: 1; min-width: 0; padding-left: 222px; position: relative; }
.page {
  width: 794px; height: 641px; background: #fff; position: relative; padding: 4px 0 0 47px;
  border-left: 1px solid #555; border-bottom: 1px solid #555;
  box-shadow: 4px 4px 7px rgba(30, 40, 60, .55);
  font-family: "Liberation Serif", serif; font-size: 18.67px; line-height: 24.65px; color: #000;
}
.para { margin: 0; white-space: nowrap; letter-spacing: .08px; }
.para-first { letter-spacing: .02px; line-height: 25px; }
.red { color: #f00; letter-spacing: .4px; }
.caret { display: inline-block; width: 1px; height: 21px; background: #000; vertical-align: -5px; }
.sq-blue { text-decoration: underline wavy #3a66c8 1px; text-underline-offset: 3px; }
.sq-red { text-decoration: underline wavy #e01010 1px; text-underline-offset: 3px; }

.figs { display: flex; align-items: flex-start; margin: 15px 0 64px 40px; height: 201px; }
.fig { margin: 0; position: relative; flex: none; font-family: "DejaVu Sans", sans-serif; }
.fig i, .fig b, .fig span { position: absolute; }
.fig-l { width: 220px; height: 200px; }
.fig-r { width: 255px; height: 170px; margin: 16px 0 0 88px; }
.l-top { left: 0; top: 0; width: 220px; height: 2px; background: #bcbcbc; }
.l-panel { left: 0; top: 2px; width: 75px; height: 94px; background: #f0f0f0; }
.l-line { left: 0; top: 95px; width: 220px; height: 4px; background: linear-gradient(#bbb, #666 60%, #999); }
.l-strip { left: 0; top: 100px; width: 220px; height: 51px; background: #efefef; }
.l-axis { left: 0; top: 151px; width: 70px; height: 3px; background: #222; }
.l-dots { left: 2px; top: 146px; width: 60px; height: 5px; background: repeating-linear-gradient(90deg, #333 0 2px, transparent 2px 28px); }
.l-btn {
  left: 7px; top: 16px; width: 65px; height: 66px; display: flex; align-items: center; justify-content: center;
  border: 2px solid #f00; border-radius: 10px; background: linear-gradient(#bbb, #d8d8d8 50%, #c2c2c2);
  box-shadow: inset 0 0 0 2px #777;
}
.pg { position: static; }
.pg-p { width: 34px; height: 40px; }
.pg-l { width: 42px; height: 33px; }
.tip {
  display: flex; align-items: center; justify-content: center; background: #ffffe8;
  border: 2px solid #f00; border-radius: 9px; color: #111; white-space: nowrap; filter: blur(.5px);
  -webkit-text-stroke: .5px #111;
}
.tip-l { left: 65px; top: 139px; width: 155px; height: 60px; font-size: 27px; padding-top: 2px; box-shadow: inset 0 0 0 2px #777; letter-spacing: 1.3px; }
.tip-r { left: 67px; top: 117px; width: 170px; height: 51px; font-size: 27px; letter-spacing: .6px; }
.r-panel { left: 0; top: 0; width: 61px; height: 73px; background: #f0f0f0; border-right: 2px solid #bbb; }
.r-line { left: 0; top: 73px; width: 255px; height: 4px; background: linear-gradient(#bbb, #666 60%, #999); }
.r-strip { left: 0; top: 78px; width: 255px; height: 51px; background: #efefef; }
.r-axis { left: 0; top: 129px; width: 255px; height: 3px; background: #222; }
.r-dots { left: 12px; top: 121px; width: 60px; height: 8px; background: repeating-linear-gradient(90deg, #333 0 2px, transparent 2px 26px); }
.r-zero { left: 134px; top: 86px; font: bold 22px/22px "Liberation Sans", sans-serif; color: #222; }
.r-tick { left: 139px; top: 108px; width: 2px; height: 9px; background: #222; }
.r-btn {
  left: 0; top: 6px; width: 57px; height: 65px; display: flex; align-items: center; justify-content: center;
  border: 2px solid #f00; border-radius: 10px; background: linear-gradient(#f2f2f2, #e6e6e6 55%, #dadada);
}
.pagenum { position: absolute; left: 743px; bottom: 11px; width: 50px; height: 42px; }
.pagenum i { position: absolute; border: 1px solid #c8c8c8; }
.pn-back1 { left: 3px; top: -1px; width: 46px; height: 43px; transform: rotate(2deg); }
.pn-back2 { left: 0; top: 1px; width: 46px; height: 40px; transform: rotate(-2deg); }
.pn-front {
  position: absolute; left: 2px; top: 3px; width: 47px; height: 36px; background: #fff; border: 1px solid #bcbcbc; border-right: 0;
  display: flex; align-items: center; justify-content: center; font: 13px "Liberation Sans", sans-serif; color: #777;
}

.vscroll { width: 17px; flex: none; display: flex; flex-direction: column; align-items: center; background: linear-gradient(90deg, #a6c2e6, #7c9dca 30%, #7c9dca 85%, #95b3da); fill: #3d4f70; }
.sb-arr { width: 10px; height: 5px; }
.sb-up { margin-top: 5px; }
.sb-track { flex: 1; width: 100%; display: flex; flex-direction: column; justify-content: flex-end; padding-bottom: 5px; }
.sb-thumb {
  height: 45px; width: 15px; margin-left: 1px; border: 1px solid #8ea6c6; border-radius: 3px;
  background: linear-gradient(90deg, #fff, #d4e2f4 50%, #bdd0ea); display: flex; align-items: center; justify-content: center;
}
.grip { width: 9px; height: 7px; background: repeating-linear-gradient(#6a7f9e 0 1px, transparent 1px 2px); }
.sb-down { fill: #4a5f84; }
.sb-browse { width: 100%; height: 52px; margin-top: 5px; background: #9ebde3; display: flex; flex-direction: column; align-items: center; justify-content: space-evenly; }
.br { width: 10px; height: 10px; }

/* status bar */
.status {
  height: 22px; flex: none; display: flex; align-items: center; position: relative; padding-right: 5px;
  background: linear-gradient(#d8e8fb, #c8dcf6 45%, #aecbef 50%, #cbdff8);
  border-top: 1px solid #6a8fc4; color: #20406c; white-space: nowrap; font-size: 10px;
}
.st { height: 100%; display: flex; align-items: center; border-right: 1px solid #9db8dc; }
.st1 { width: 105px; padding-left: 8px; }
.st2 { width: 101px; padding-left: 9px; }
.st3 { width: 134px; padding-left: 9px; }
.st-lang { margin-left: 14px; letter-spacing: -.22px; }
.st-fill { flex: 1; height: 100%; border-right: 1px solid #eef5fd; }
.viewctl { margin-left: 5px; display: flex; height: 18px; width: 91px; flex: none; border: 1px solid #9db8dc; border-radius: 3px; overflow: hidden; background: linear-gradient(#dfebfa, #bcd3f0); }
.vb { flex: 1; display: flex; align-items: center; justify-content: center; border-right: 1px solid #b4cbe6; }
.vb:last-child { border-right: 0; }
.vb.on { background: linear-gradient(#fde9a8, #fbc85c); }
.zoomval { width: 46px; flex: none; padding-left: 9px; font-size: 10.5px; color: #15428b; }
.zbtn {
  width: 15px; height: 15px; flex: none; border-radius: 50%; border: 1px solid #5b7ca8; display: flex; align-items: center; justify-content: center;
  background: linear-gradient(#eef4fc, #b8cee9); font: bold 13px/13px "Liberation Sans", sans-serif; color: #46617f;
}
.zslider { width: 101px; height: 2px; background: #f2f7fe; border-top: 1px solid #8faad0; position: relative; flex: none; display: flex; justify-content: center; align-items: center; margin: 0 1px; }
.zthumb { width: 10px; height: 14px; }

/* taskbar */
.taskbar {
  height: 40px; flex: none; display: flex; align-items: center; position: relative;
  background: linear-gradient(90deg, #2b5c9f 0, #2a5a9c 12%, #16396f 25%, #0d2c62 56%, #1c4480 66%, #4470ab 70%, #2e5a96 73%, #0f2d5c 76%, #0f2d5c 100%);
  border-top: 1px solid #0f2144; box-shadow: inset 0 1px 0 #2a4a7a;
  padding-left: 8px; color: #fff;
}
.orb { width: 38px; height: 38px; }
.tgrip { width: 9px; height: 30px; margin-left: 11px; background: radial-gradient(circle, #0c1c38 .9px, transparent 1.1px) 0 0 / 3px 3px; }
.pin { display: flex; justify-content: center; align-items: center; height: 36px; flex: none; }
.p-folder { width: 32px; margin-left: 23px; }
.p-media { width: 24px; margin-left: 31px; }
.p-ie { width: 30px; margin-left: 37px; }
.p-mail { width: 32px; margin-left: 29px; }
.p-ie2 { width: 34px; margin-left: 31px; }
.ti { width: 100%; height: 100%; }
.p-folder .ti { height: 30px; }
.p-media .ti { height: 28px; }
.p-ie .ti { height: 30px; }
.p-mail .ti { height: 32px; }
.p-ie2 .ti { height: 32px; }
.ie-e { font: bold 24px "DejaVu Sans", sans-serif; fill: #1f7ad0; }
.tbtn {
  height: 37px; width: 57px; flex: none; display: flex; align-items: center; justify-content: center; margin-left: 5px;
  border: 1px solid #5c7ea8; border-radius: 3px; background: linear-gradient(#54749f, #3c5f8c 50%, #2c4f80);
  box-shadow: inset 0 0 0 1px rgba(255,255,255,.1);
}
.tbtn .ti { width: 30px; height: 30px; }
.b-p { margin-left: 15px; }
.b-globe { width: 55px; }
.b-word { width: 55px; margin-left: 3px; background: linear-gradient(#9fb6d2, #7f9cc0 50%, #6b8ab2); }
.b-opera { margin-left: 7px; }
.tb-sep { width: 2px; height: 34px; background: #4a6890; margin: 0 0 0 1px; }
.b-plant { width: 56px; margin-left: 4px; }
.p-let { font: bold 17px "DejaVu Sans", sans-serif; fill: #e8f0f8; }
.w-let { font: bold 10px "Liberation Sans", sans-serif; fill: #2e5ea8; }
.tfill { flex: 1; }
.lang { width: 31px; flex: none; margin-left: 7px; font-size: 11px; margin-bottom: 4px; color: #f2f6fb; }
.tray { display: flex; gap: 8px; width: 219px; flex: none; align-items: center; }
.ic16b { width: 16px; height: 16px; }
.clock { width: 68px; flex: none; display: flex; flex-direction: column; align-items: center; font: 11px/16px "Open Sans", sans-serif; color: #eef3f9; }
.showdesk { width: 14px; height: 36px; flex: none; margin: 0 0 0 4px; border: 1px solid #5a7ba0; background: linear-gradient(90deg, #486d98, #1f4170); border-radius: 2px; }
.ab-g { font: bold 7px "DejaVu Sans", sans-serif; fill: #6a6a6a; }
.ac-g { font: bold 7px "DejaVu Sans", sans-serif; fill: #3a8c2c; }
```
